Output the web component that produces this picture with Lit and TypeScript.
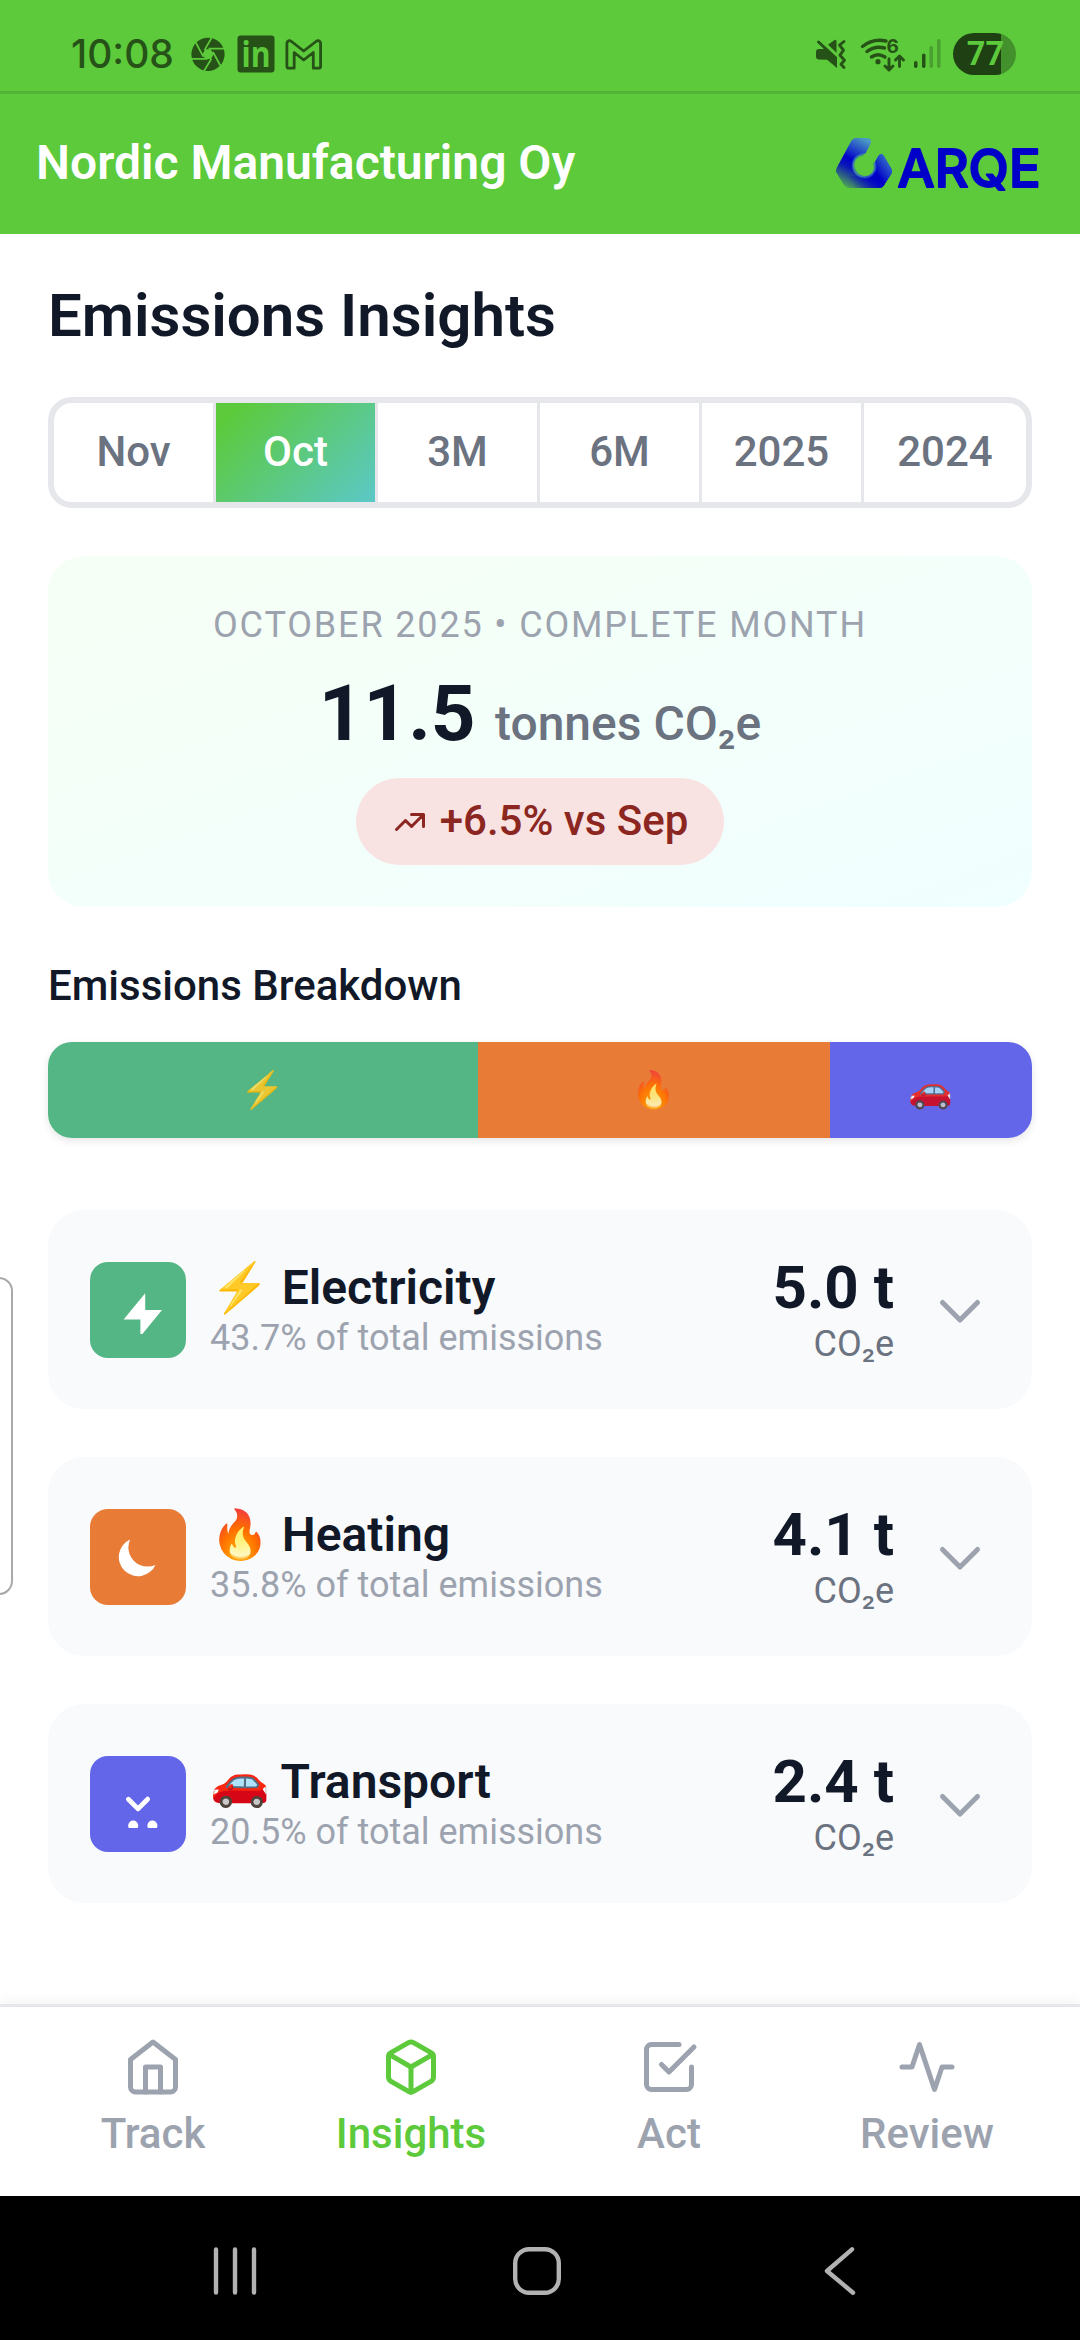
import { LitElement, html, svg, css, type TemplateResult } from "lit";
import { customElement, property } from "lit/decorators.js";
import { classMap } from "lit/directives/class-map.js";
import { styleMap } from "lit/directives/style-map.js";

interface Source {
  name: string;
  emoji: string;
  share: number;
  tonnes: string;
  color: string;
  icon: TemplateResult;
}

const SOURCES: Source[] = [
  {
    name: "Electricity",
    emoji: "⚡",
    share: 43.7,
    tonnes: "5.0 t",
    color: "#55b685",
    icon: svg`<path d="M13 10V3L4 14h7v7l9-11h-7z"/>`,
  },
  {
    name: "Heating",
    emoji: "🔥",
    share: 35.8,
    tonnes: "4.1 t",
    color: "#e87c36",
    icon: svg`<path d="M17.293 13.293A8 8 0 016.707 2.707a8.001 8.001 0 1010.586 10.586z"/>`,
  },
  {
    name: "Transport",
    emoji: "🚗",
    share: 20.5,
    tonnes: "2.4 t",
    color: "#6366e8",
    icon: svg`<circle cx="8" cy="19" r="2.1"/><circle cx="16" cy="19" r="2.1"/><path d="M5.293 7.293a1 1 0 011.414 0L10 10.586l3.293-3.293a1 1 0 111.414 1.414l-4 4a1 1 0 01-1.414 0l-4-4a1 1 0 010-1.414z"/>`,
  },
];

const PERIODS = ["Nov", "Oct", "3M", "6M", "2025", "2024"];

const TABS = [
  {
    label: "Track",
    icon: svg`<path d="M3 9l9-7 9 7v11a2 2 0 0 1-2 2H5a2 2 0 0 1-2-2z"/><polyline points="9 22 9 12 15 12 15 22"/>`,
  },
  {
    label: "Insights",
    icon: svg`<path d="M21 16V8a2 2 0 0 0-1-1.73l-7-4a2 2 0 0 0-2 0l-7 4A2 2 0 0 0 3 8v8a2 2 0 0 0 1 1.73l7 4a2 2 0 0 0 2 0l7-4A2 2 0 0 0 21 16z"/><polyline points="3.27 6.96 12 12.01 20.73 6.96"/><line x1="12" y1="22.08" x2="12" y2="12"/>`,
  },
  {
    label: "Act",
    icon: svg`<polyline points="9 11 12 14 22 4"/><path d="M21 12v7a2 2 0 0 1-2 2H5a2 2 0 0 1-2-2V5a2 2 0 0 1 2-2h11"/>`,
  },
  {
    label: "Review",
    icon: svg`<polyline points="22 12 18 12 15 21 9 3 6 12 2 12"/>`,
  },
];

@customElement("status-bar")
class StatusBar extends LitElement {
  static styles = css`
    :host {
      display: flex;
      justify-content: space-between;
      align-items: center;
      box-sizing: border-box;
      height: 94px;
      padding: 17px 64px 0 71px;
      border-bottom: 3px solid #53b335;
      background: #5cca3b;
      color: #265218;
    }
    .side {
      display: flex;
      align-items: center;
    }
    .clock {
      width: 120px;
      font: 500 39px/60px Inter, sans-serif;
      white-space: nowrap;
    }
    svg {
      display: block;
      fill: currentColor;
      overflow: visible;
    }
    .line {
      fill: none;
      stroke: currentColor;
    }
    .cut {
      fill: none;
      stroke: #5cca3b;
    }
    .in {
      font: 700 35px/40px "Open Sans", sans-serif;
      fill: #5cca3b;
    }
    .mail {
      margin-left: -1px;
    }
    .six {
      font: 700 19px Inter, sans-serif;
    }
    .battery {
      display: flex;
      align-items: center;
      justify-content: center;
      box-sizing: border-box;
      width: 63px;
      height: 42px;
      padding-left: 2px;
      border-radius: 21px;
      background: linear-gradient(90deg, #1e4013 48px, #43912c 48px);
      color: #5cca3b;
      font: 700 32.500px/42px Roboto, sans-serif;
    }
  `;

  render() {
    return html`
      <div class="side">
        <span class="clock">10:08</span>
        <svg width="34" height="36" viewBox="0 0 34 36">
          <circle cx="17" cy="18.3" r="16.6" />
          <path class="cut" stroke-width="1.7" d="M12.4 20.8L4.8 6.500M13.5 14.2L20.500 2M17.5 12.6H33M22 16l7.600 14M20.500 22.500L13 35M16.500 22.800H1" />
          <path fill="#5cca3b" d="M14.300 13.300h5.400l3 5-2.900 4.800h-5.500l-2.800-4.800z" />
        </svg>
        <svg width="61" height="38" viewBox="0 0 61 38">
          <rect x="12.500" y="0.500" width="37" height="37" rx="3" />
          <text class="in" x="16.500" y="32" textLength="29" lengthAdjust="spacingAndGlyphs">in</text>
        </svg>
        <svg class="mail" width="38" height="31" viewBox="0 0 38 31">
          <path class="line" stroke-width="2.800" stroke-linejoin="round" d="M1.900 27V4.500C1.900 1.500 4.500 1 6.500 2.500L18.700 12 31 2.500C33 1 35.600 1.500 35.600 4.500V27.500q0 1.700-1.700 1.700H28.300V13.500L18.700 21 9.200 13.500V29.200H3.600q-1.700 0-1.700-1.700z" />
        </svg>
      </div>
      <div class="side">
        <svg width="200" height="42" viewBox="0 0 200 42">
          <g>
            <path d="M66 16h7l15 15q2 2-0.800 4L76 26.500H66q-3 0-3-3V19q0-3 3-3z" />
            <path d="M74 12.500l7.500-5.500q2-0.800 2 1.500V23z" />
            <path d="M71 15.500L84 27.500V35L73.500 26.300H67.500z" />
            <path class="cut" stroke-width="3" d="M68 7l20 19" />
            <path class="line" stroke-width="3" stroke-linecap="round" d="M65.500 9l20 18.500" />
            <path class="cut" stroke-width="14" d="M91 6v33" />
            <path class="line" stroke-width="2.900" stroke-linecap="round" stroke-linejoin="round" d="M91 8.500l-4.500 3.700 4 5-3.500 5 4.500 5-3.500 4 3 3.300" />
          </g>
          <g class="line" stroke-width="3.400" stroke-linecap="round">
            <path d="M109.500 13.500Q120 5 133 8" />
            <path d="M114 18.500Q122 12.500 131.500 15" />
            <path d="M118.500 24Q125 19.500 132 24" />
            <path stroke-width="2.900" stroke-linejoin="round" d="M136 26v10.500M132 33l4 4 4-4M146.500 33.500V23.500M142.500 27l4-4 4 4" />
          </g>
          <circle cx="125" cy="28.700" r="2.600" />
          <text class="six" x="133.500" y="19.500">6</text>
          <rect x="161" y="28" width="3.500" height="7" rx="1.700" />
          <rect x="169" y="20.500" width="3.500" height="14.500" rx="1.700" />
          <rect x="176.500" y="13" width="3.500" height="22" rx="1.700" opacity="0.350" />
          <rect x="184" y="6" width="3.500" height="29" rx="1.700" opacity="0.350" />
        </svg>
        <span class="battery">77</span>
      </div>
    `;
  }
}

@customElement("brand-header")
class BrandHeader extends LitElement {
  static styles = css`
    :host {
      display: flex;
      justify-content: space-between;
      align-items: center;
      height: 140px;
      padding: 0 34px 0 36px;
      background: #5cca3b;
      color: #fff;
    }
    .company {
      font-size: 48px;
      line-height: 72px;
      font-weight: 600;
      padding-bottom: 3px;
      white-space: nowrap;
    }
    .logo {
      display: block;
      overflow: visible;
    }
    .wordmark {
      font: 500 52px Inter, sans-serif;
      fill: #0000c8;
      stroke: #0000c8;
      stroke-width: 2px;
      stroke-linejoin: round;
    }
  `;

  render() {
    return html`
      <span class="company">Nordic Manufacturing Oy</span>
      <svg class="logo" width="210" height="76" viewBox="0 -8 210 76">
        <defs>
          <linearGradient id="left" gradientUnits="userSpaceOnUse" x1="34" y1="8" x2="8" y2="56">
            <stop offset="0" stop-color="#4a9bc4" />
            <stop offset="0.450" stop-color="#0000c8" />
            <stop offset="0.600" stop-color="#0a18b8" />
            <stop offset="1" stop-color="#5cc03e" />
          </linearGradient>
          <linearGradient id="right" gradientUnits="userSpaceOnUse" x1="54" y1="22" x2="16" y2="50">
            <stop offset="0" stop-color="#3f86c8" />
            <stop offset="0.450" stop-color="#0000c8" />
            <stop offset="1" stop-color="#0000c8" stop-opacity="0" />
          </linearGradient>
        </defs>
        <path fill="url(#left)" d="M19.500 4H31q5.500 0 3.500 6l-5 9.500q-8.500 0-12 7.500-3 9 4 14.500 8 4 15-1.500 4.500-5 2.500-12l3-5.500q3-4.500 6-0.500l7.500 13q1.500 2.500 0 4.500l-8 12.500q-1.500 2-4 2H13.500q-3.500 0-5.500-3L0.600 39q-1.300-2.500 0-5L15.500 6.500Q17 4 19.500 4z" />
        <path fill="url(#right)" d="M21.500 41.500q8 4 15-1.500 4.500-5 2.500-12l3-5.500q3-4.500 6-0.500l7.500 13q1.500 2.500 0 4.500l-8 12.500q-1.500 2-4 2H13.500q-3.500 0-5.500-3L3 43z" />
        <path fill="none" stroke="#2f62cf" stroke-width="2.500" stroke-opacity="0.700" d="M27.500 20.200C18.500 21 14.500 30 19 37.500s15 7.500 19 0q2-4 0.300-9" />
        <text class="wordmark" x="61.500" y="53" textLength="143" lengthAdjust="spacingAndGlyphs">ARQE</text>
      </svg>
    `;
  }
}

@customElement("source-card")
class SourceCard extends LitElement {
  @property({ attribute: false }) source!: Source;

  static styles = css`
    :host {
      display: flex;
      align-items: center;
      box-sizing: border-box;
      height: 199px;
      padding: 0 42px;
      border-radius: 36px;
      background: #f9fafc;
    }
    .tile {
      display: flex;
      align-items: center;
      justify-content: center;
      width: 96px;
      height: 96px;
      border-radius: 18px;
    }
    .glyph {
      width: 48px;
      height: 48px;
      fill: #fff;
      overflow: hidden;
    }
    .text {
      flex: 1;
      margin-left: 24px;
    }
    .name {
      height: 56px;
      font-size: 48px;
      line-height: 56px;
      font-weight: 600;
      color: #111827;
      white-space: nowrap;
    }
    .share {
      font-size: 36px;
      line-height: 44px;
      color: #9ca3af;
    }
    .value {
      margin-right: 36px;
      text-align: right;
    }
    .tonnes {
      font-size: 60px;
      line-height: 69.600px;
      font-weight: 700;
      color: #111827;
    }
    .unit {
      height: 44px;
      font-size: 36px;
      line-height: 44px;
      color: #6b7280;
    }
    .chevron {
      width: 60px;
      height: 60px;
      fill: none;
      stroke: #9ca3af;
      stroke-width: 2;
      stroke-linecap: round;
      stroke-linejoin: round;
    }
  `;

  render() {
    const s = this.source;
    return html`
      <div class="tile" style=${styleMap({ background: s.color })}>
        <svg class="glyph" viewBox="0 0 20 20">${s.icon}</svg>
      </div>
      <div class="text">
        <div class="name">${s.emoji} ${s.name}</div>
        <div class="share">${s.share}% of total emissions</div>
      </div>
      <div class="value">
        <div class="tonnes">${s.tonnes}</div>
        <div class="unit">CO₂e</div>
      </div>
      <svg class="chevron" viewBox="0 0 24 24"><path d="M19 9l-7 7-7-7" /></svg>
    `;
  }
}

@customElement("app-root")
class AppRoot extends LitElement {
  static styles = css`
    :host {
      position: relative;
      display: flex;
      flex-direction: column;
      width: 1080px;
      height: 2340px;
      overflow: hidden;
      background: #fff;
      color: #111827;
      font-family: Roboto, "Noto Color Emoji", sans-serif;
    }
    main {
      flex: 1;
      min-height: 0;
      padding: 37px 48px 0;
    }
    h1,
    h2 {
      margin: 0;
      font-weight: 600;
    }
    h1 {
      font-size: 60px;
      line-height: 90px;
    }
    h2 {
      margin: 47px 0 25px;
      font-size: 42px;
      line-height: 63px;
      font-weight: 500;
    }
    .periods {
      display: grid;
      grid-template-columns: repeat(6, 1fr);
      box-sizing: border-box;
      height: 111px;
      margin-top: 36px;
      border: 6px solid #e5e7eb;
      border-radius: 24px;
      overflow: hidden;
    }
    .period {
      display: flex;
      align-items: center;
      justify-content: center;
      padding-bottom: 2px;
      border-right: 3px solid #e5e7eb;
      font-size: 42px;
      font-weight: 500;
      color: #6b7280;
    }
    .period:last-child {
      border-right: 0;
    }
    .selected {
      background: linear-gradient(135deg, #5cca3b 10%, #5bc8c8 100%);
      color: #fff;
    }
    .summary {
      display: flex;
      flex-direction: column;
      align-items: center;
      box-sizing: border-box;
      height: 351px;
      margin-top: 48px;
      padding-top: 42px;
      border-radius: 36px;
      background: linear-gradient(to bottom right, #f6fff5, #f0ffff);
    }
    .label {
      font-size: 36px;
      line-height: 54px;
      letter-spacing: 1.850px;
      color: #9ca3af;
      text-transform: uppercase;
      white-space: nowrap;
    }
    .total {
      margin: 12px 0 15px;
      height: 99px;
      font-size: 78px;
      line-height: 99px;
      font-weight: 700;
      white-space: nowrap;
    }
    .total-unit {
      font-size: 48px;
      line-height: 48px;
      font-weight: 500;
      color: #6b7280;
    }
    .change {
      display: flex;
      align-items: center;
      gap: 12px;
      height: 87px;
      padding: 0 36px;
      border-radius: 44px;
      background: #f9e2e2;
      color: #8b2621;
      font-size: 42px;
      font-weight: 500;
      white-space: nowrap;
    }
    .change span {
      padding-bottom: 2px;
    }
    .trend {
      width: 36px;
      height: 36px;
      fill: none;
      stroke: currentColor;
      stroke-width: 2;
      stroke-linecap: round;
      stroke-linejoin: round;
    }
    .bar {
      display: flex;
      height: 96px;
      border-radius: 24px;
      overflow: hidden;
      box-shadow: 0 3px 9px rgba(0, 0, 0, 0.100);
    }
    .segment {
      display: flex;
      align-items: center;
      justify-content: center;
      font-size: 36px;
      color: rgba(0, 0, 0, 0.870);
    }
    .sources {
      display: grid;
      gap: 48px;
      margin-top: 72px;
    }
    nav {
      display: flex;
      box-sizing: border-box;
      height: 192px;
      padding: 30px 24px 0;
      border-top: 3px solid #e5e7eb;
      background: #fff;
      box-shadow: 0 -3px 12px rgba(0, 0, 0, 0.050);
    }
    .tab {
      flex: 1;
      display: flex;
      flex-direction: column;
      align-items: center;
      gap: 12px;
      color: #9ca3af;
      font-size: 42px;
      line-height: 49px;
      font-weight: 500;
    }
    .tab svg {
      width: 60px;
      height: 60px;
      fill: none;
      stroke: currentColor;
      stroke-width: 2;
      stroke-linecap: round;
      stroke-linejoin: round;
    }
    .active {
      color: #5cca3b;
    }
    .system {
      display: flex;
      align-items: center;
      box-sizing: border-box;
      height: 144px;
      padding: 6px 0 0 211px;
      background: #000;
    }
    .system svg {
      fill: none;
      stroke: #b2b2b2;
      stroke-width: 4.400;
      stroke-linecap: round;
      stroke-linejoin: round;
    }
    .home {
      margin: 0 260px 0 253px;
    }
    .edge-handle {
      position: absolute;
      left: -20px;
      top: 1277px;
      box-sizing: border-box;
      width: 33px;
      height: 318px;
      border: 2px solid #a9a9a9;
      border-radius: 14px;
      background: #fff;
    }
  `;

  render() {
    return html`
      <status-bar></status-bar>
      <brand-header></brand-header>
      <main>
        <h1>Emissions Insights</h1>
        <div class="periods">
          ${PERIODS.map(
            (p) => html`<div class=${classMap({ period: true, selected: p === "Oct" })}>${p}</div>`
          )}
        </div>
        <section class="summary">
          <div class="label">October 2025 • Complete Month</div>
          <div class="total">11.5 <span class="total-unit">tonnes CO₂e</span></div>
          <div class="change">
            <svg class="trend" viewBox="0 0 24 24"><path d="M13 7h8m0 0v8m0-8l-8 8-4-4-6 6" /></svg>
            <span>+6.5% vs Sep</span>
          </div>
        </section>
        <h2>Emissions Breakdown</h2>
        <div class="bar">
          ${SOURCES.map(
            (s) => html`<div
              class="segment"
              style=${styleMap({ width: `${s.share}%`, background: s.color })}
            >${s.emoji}</div>`
          )}
        </div>
        <div class="sources">
          ${SOURCES.map((s) => html`<source-card .source=${s}></source-card>`)}
        </div>
      </main>
      <nav>
        ${TABS.map(
          (t) => html`<div class=${classMap({ tab: true, active: t.label === "Insights" })}>
            <svg viewBox="0 0 24 24">${t.icon}</svg>
            <span>${t.label}</span>
          </div>`
        )}
      </nav>
      <div class="system">
        <svg width="48" height="50" viewBox="0 0 48 50"><path d="M5 3.500v43M24 3.500v43M43 3.500v43" /></svg>
        <svg class="home" width="50" height="50" viewBox="0 0 50 50"><rect x="3.200" y="3.200" width="43.600" height="43.600" rx="14" /></svg>
        <svg width="34" height="50" viewBox="0 0 34 50"><path d="M30 3.300L5 25l26 21.700" /></svg>
      </div>
      <div class="edge-handle"></div>
    `;
  }
}
